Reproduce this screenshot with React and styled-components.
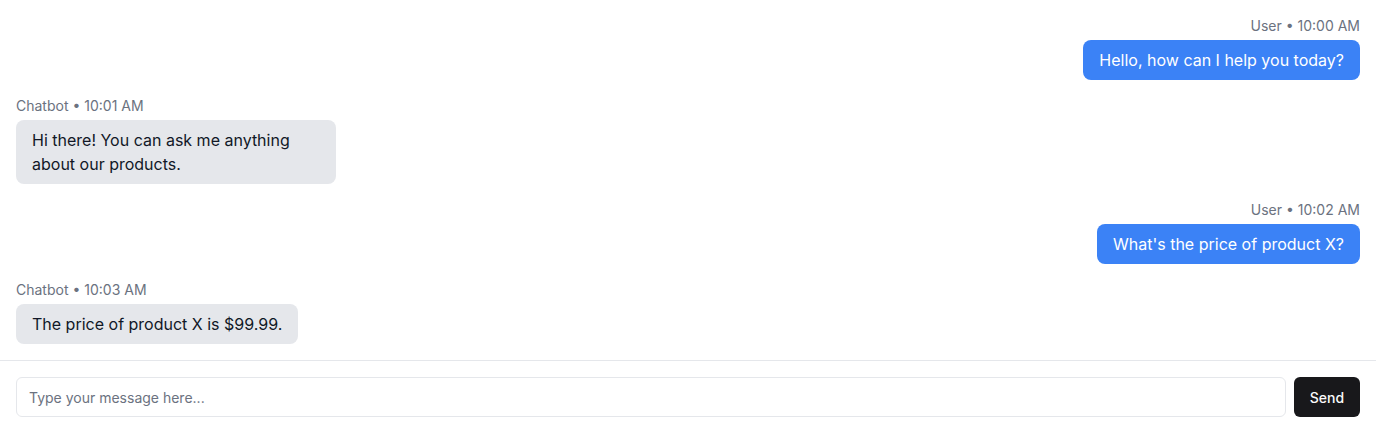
import styled, { createGlobalStyle } from "styled-components";

const GlobalStyle = createGlobalStyle`
  * { box-sizing: border-box; }
  body {
    margin: 0;
    font-family: Inter, "Noto Sans", sans-serif;
    background: #ffffff;
    color: #111827;
  }
`;

const messages = [
  { from: "user", author: "User", time: "10:00 AM", text: "Hello, how can I help you today?" },
  { from: "bot", author: "Chatbot", time: "10:01 AM", text: "Hi there! You can ask me anything about our products." },
  { from: "user", author: "User", time: "10:02 AM", text: "What's the price of product X?" },
  { from: "bot", author: "Chatbot", time: "10:03 AM", text: "The price of product X is $99.99." },
];

function App() {
  return (
    <>
      <GlobalStyle />
      <Page>
        <Messages>
          {messages.map((m, i) => (
            <Message key={i} mine={m.from === "user"}>
              <Meta>{m.author} • {m.time}</Meta>
              <Bubble mine={m.from === "user"}>{m.text}</Bubble>
            </Message>
          ))}
        </Messages>
        <Composer>
          <Input placeholder="Type your message here..." />
          <SendButton>Send</SendButton>
        </Composer>
      </Page>
    </>
  );
}

export default App;

const Page = styled.div`
  display: flex;
  flex-direction: column;
  width: 100%;
`;

const Messages = styled.div`
  display: flex;
  flex-direction: column;
  gap: 16px;
  padding: 16px;
`;

const Message = styled.div`
  display: flex;
  flex-direction: column;
  align-items: ${(p) => (p.mine ? "flex-end" : "flex-start")};
  gap: 4px;
`;

const Meta = styled.div`
  font-size: 14px;
  line-height: 20px;
  color: #6b7280;
`;

const Bubble = styled.div`
  max-width: 320px;
  max-width: ${(p) => (p.mine ? "none" : "320px")};
  padding: 8px 16px;
  border-radius: 8px;
  font-size: 16px;
  line-height: 24px;
  background: ${(p) => (p.mine ? "#3b82f6" : "#e5e7eb")};
  color: ${(p) => (p.mine ? "#ffffff" : "#111827")};
`;

const Composer = styled.div`
  display: flex;
  gap: 8px;
  padding: 16px;
  border-top: 1px solid #e5e7eb;
`;

const Input = styled.input`
  flex: 1;
  height: 40px;
  padding: 0 12px;
  border: 1px solid #e5e7eb;
  border-radius: 6px;
  font-family: Inter, "Noto Sans", sans-serif;
  font-size: 14px;
  color: #111827;
  outline: none;
  &::placeholder {
    color: #6b7280;
  }
`;

const SendButton = styled.button`
  width: 66px;
  height: 40px;
  border: none;
  border-radius: 6px;
  background: #18181b;
  color: #fafafa;
  font-family: Inter, "Noto Sans", sans-serif;
  font-size: 14px;
  font-weight: 500;
  cursor: pointer;
`;
